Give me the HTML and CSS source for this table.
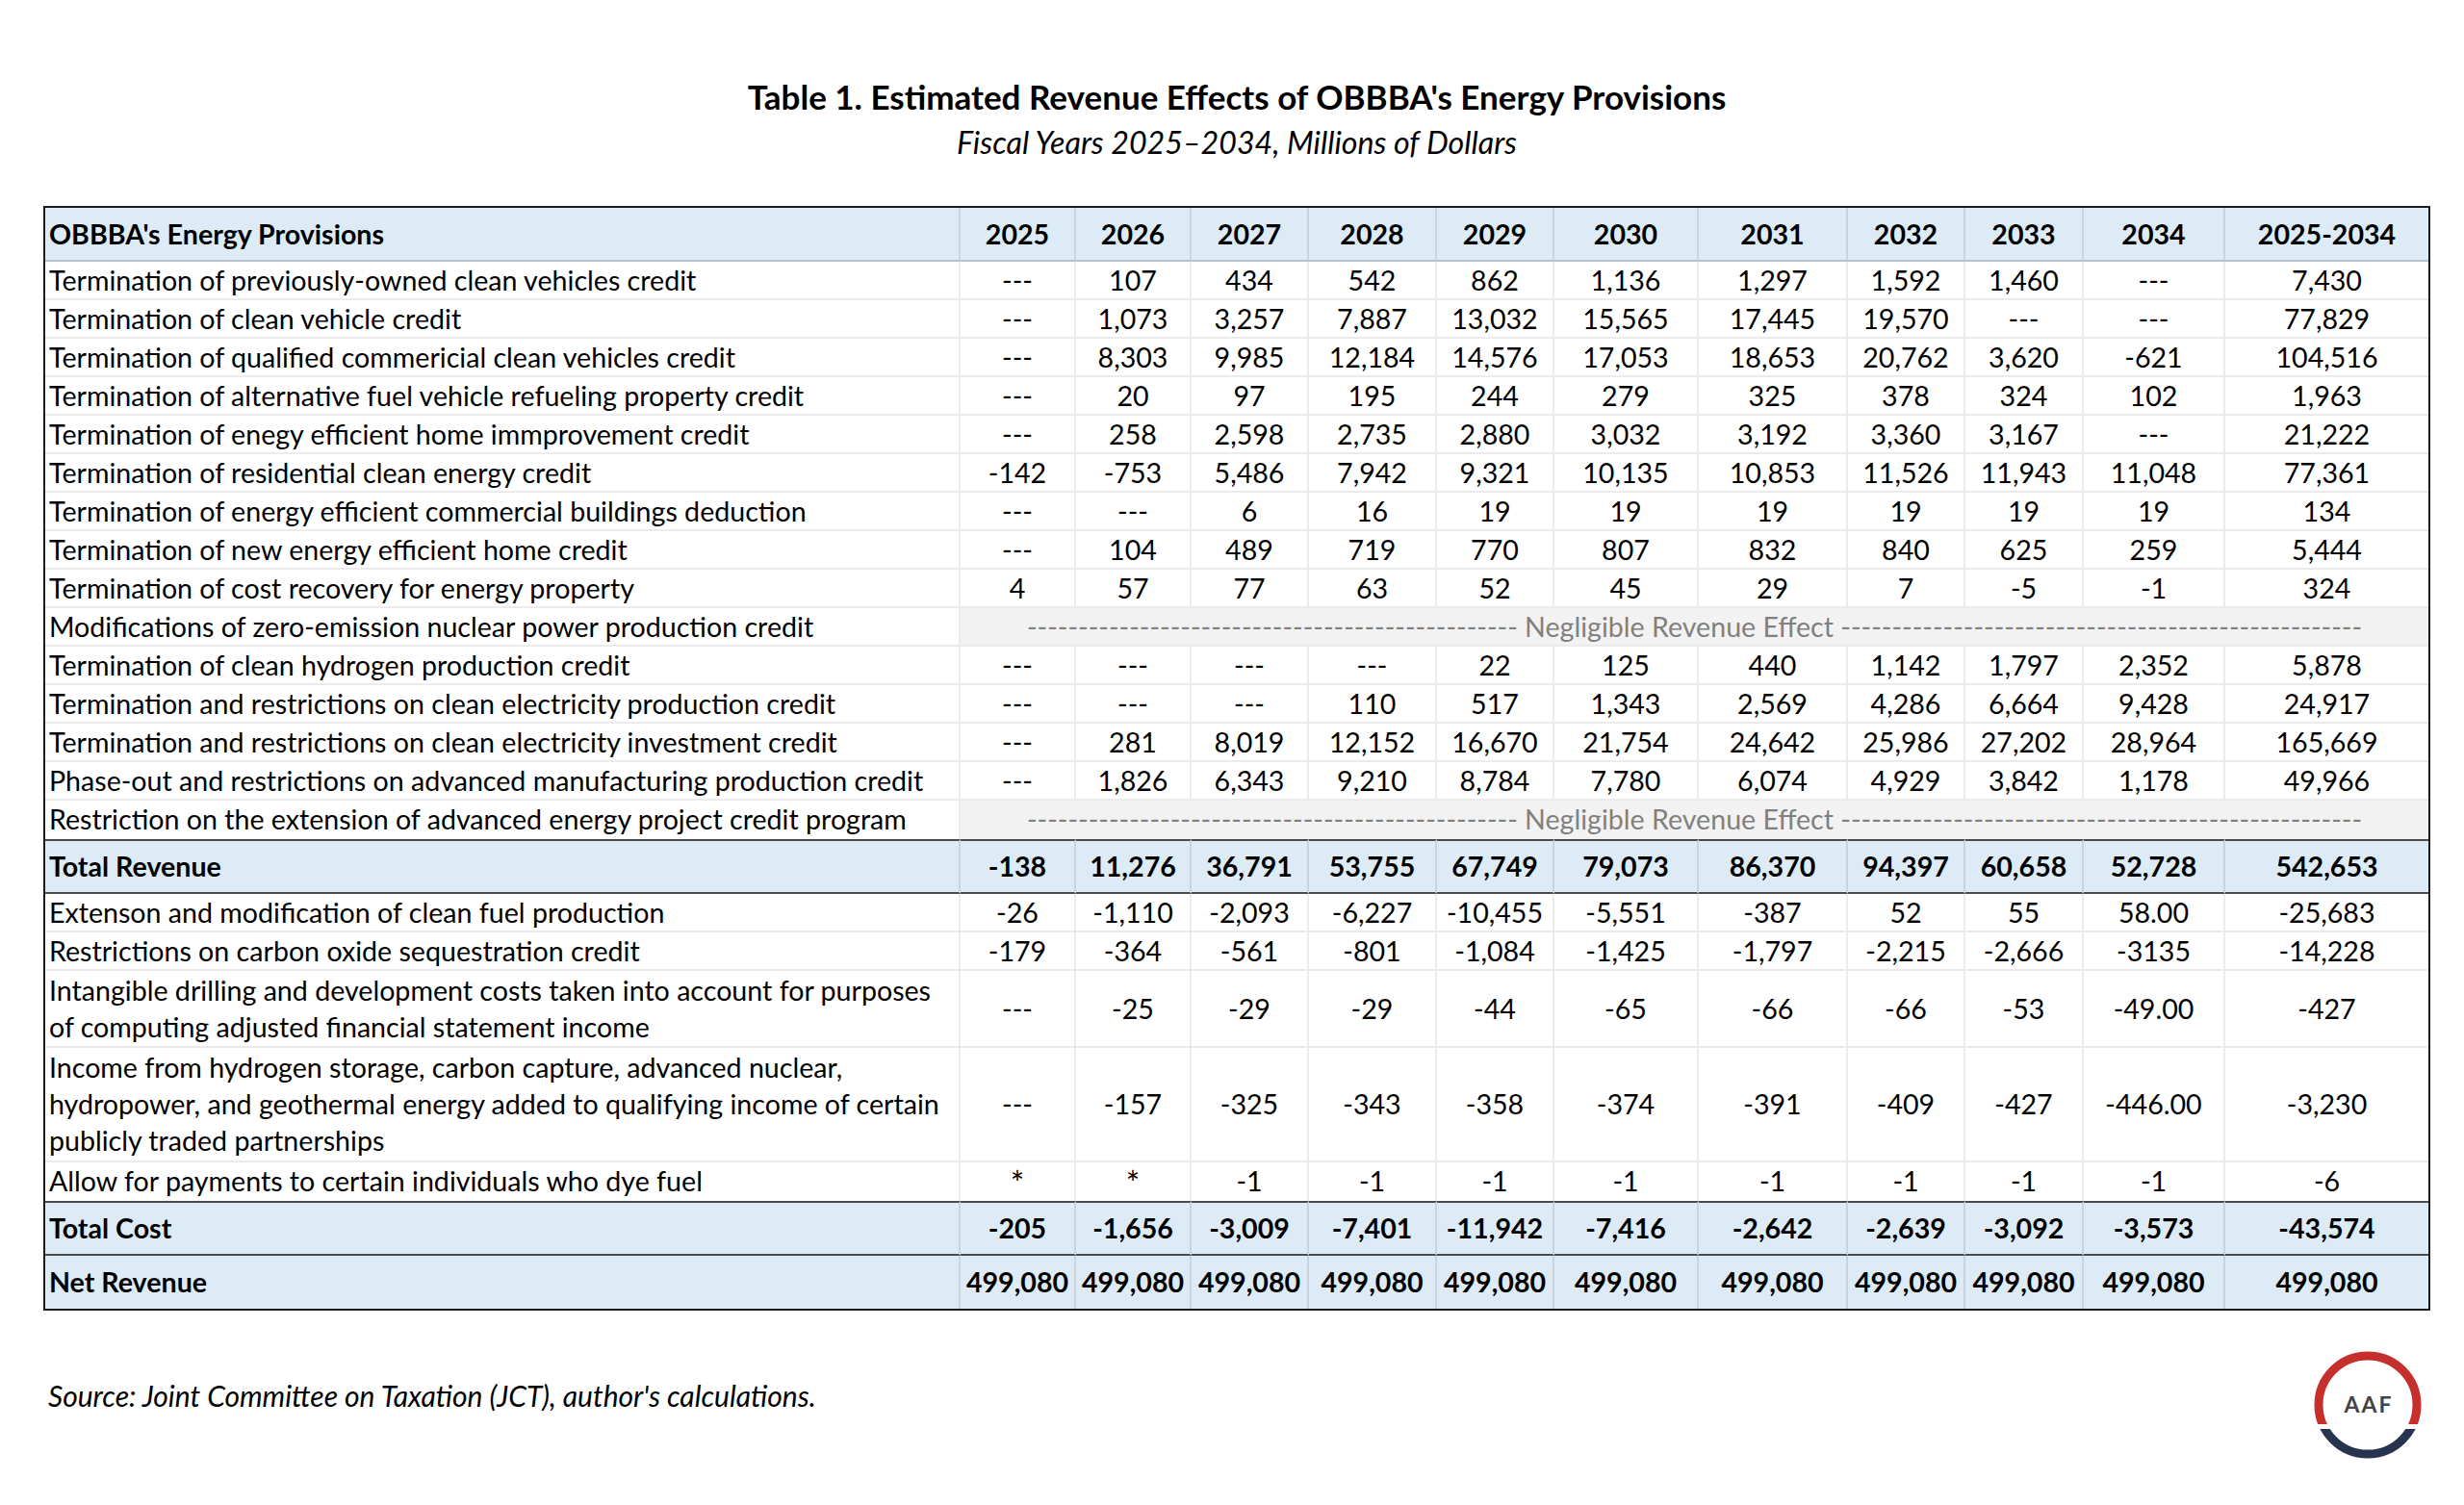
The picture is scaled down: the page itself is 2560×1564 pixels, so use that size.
FILE: index.html
```html
<!DOCTYPE html>
<html lang="en">
<head>
<meta charset="utf-8">
<title>Table 1. Estimated Revenue Effects of OBBBA's Energy Provisions</title>
<link rel="stylesheet" href="styles.css">
</head>
<body>
<div class="sheet">
  <h1 class="title">Table 1. Estimated Revenue Effects of OBBBA's Energy Provisions</h1>
  <p class="subtitle">Fiscal Years 2025–2034, Millions of Dollars</p>
  <table class="grid">
    <colgroup>
      <col class="c-label"><col class="c-y120"><col class="c-y120"><col class="c-y122"><col class="c-y133"><col class="c-y122"><col class="c-y150"><col class="c-y155"><col class="c-y122"><col class="c-y123"><col class="c-y147"><col class="c-total">
    </colgroup>
    <thead>
      <tr class="head">
        <th class="label">OBBBA's Energy Provisions</th><th>2025</th><th>2026</th><th>2027</th><th>2028</th><th>2029</th><th>2030</th><th>2031</th><th>2032</th><th>2033</th><th>2034</th><th class="last">2025-2034</th>
      </tr>
    </thead>
    <tbody>
      <tr><td class="label">Termination of previously-owned clean vehicles credit</td><td>---</td><td>107</td><td>434</td><td>542</td><td>862</td><td>1,136</td><td>1,297</td><td>1,592</td><td>1,460</td><td>---</td><td class="last">7,430</td></tr>
      <tr><td class="label">Termination of clean vehicle credit</td><td>---</td><td>1,073</td><td>3,257</td><td>7,887</td><td>13,032</td><td>15,565</td><td>17,445</td><td>19,570</td><td>---</td><td>---</td><td class="last">77,829</td></tr>
      <tr><td class="label">Termination of qualified commericial clean vehicles credit</td><td>---</td><td>8,303</td><td>9,985</td><td>12,184</td><td>14,576</td><td>17,053</td><td>18,653</td><td>20,762</td><td>3,620</td><td>-621</td><td class="last">104,516</td></tr>
      <tr><td class="label">Termination of alternative fuel vehicle refueling property credit</td><td>---</td><td>20</td><td>97</td><td>195</td><td>244</td><td>279</td><td>325</td><td>378</td><td>324</td><td>102</td><td class="last">1,963</td></tr>
      <tr><td class="label">Termination of enegy efficient home immprovement credit</td><td>---</td><td>258</td><td>2,598</td><td>2,735</td><td>2,880</td><td>3,032</td><td>3,192</td><td>3,360</td><td>3,167</td><td>---</td><td class="last">21,222</td></tr>
      <tr><td class="label">Termination of residential clean energy credit</td><td>-142</td><td>-753</td><td>5,486</td><td>7,942</td><td>9,321</td><td>10,135</td><td>10,853</td><td>11,526</td><td>11,943</td><td>11,048</td><td class="last">77,361</td></tr>
      <tr><td class="label">Termination of energy efficient commercial buildings deduction</td><td>---</td><td>---</td><td>6</td><td>16</td><td>19</td><td>19</td><td>19</td><td>19</td><td>19</td><td>19</td><td class="last">134</td></tr>
      <tr><td class="label">Termination of new energy efficient home credit</td><td>---</td><td>104</td><td>489</td><td>719</td><td>770</td><td>807</td><td>832</td><td>840</td><td>625</td><td>259</td><td class="last">5,444</td></tr>
      <tr><td class="label">Termination of cost recovery for energy property</td><td>4</td><td>57</td><td>77</td><td>63</td><td>52</td><td>45</td><td>29</td><td>7</td><td>-5</td><td>-1</td><td class="last">324</td></tr>
      <tr class="neg"><td class="label">Modifications of zero-emission nuclear power production credit</td><td class="merged last" colspan="11">------------------------------------------------ Negligible Revenue Effect ---------------------------------------------------</td></tr>
      <tr><td class="label">Termination of clean hydrogen production credit</td><td>---</td><td>---</td><td>---</td><td>---</td><td>22</td><td>125</td><td>440</td><td>1,142</td><td>1,797</td><td>2,352</td><td class="last">5,878</td></tr>
      <tr><td class="label">Termination and restrictions on clean electricity production credit</td><td>---</td><td>---</td><td>---</td><td>110</td><td>517</td><td>1,343</td><td>2,569</td><td>4,286</td><td>6,664</td><td>9,428</td><td class="last">24,917</td></tr>
      <tr><td class="label">Termination and restrictions on clean electricity investment credit</td><td>---</td><td>281</td><td>8,019</td><td>12,152</td><td>16,670</td><td>21,754</td><td>24,642</td><td>25,986</td><td>27,202</td><td>28,964</td><td class="last">165,669</td></tr>
      <tr><td class="label">Phase-out and restrictions on advanced manufacturing production credit</td><td>---</td><td>1,826</td><td>6,343</td><td>9,210</td><td>8,784</td><td>7,780</td><td>6,074</td><td>4,929</td><td>3,842</td><td>1,178</td><td class="last">49,966</td></tr>
      <tr class="neg pre"><td class="label">Restriction on the extension of advanced energy project credit program</td><td class="merged last" colspan="11">------------------------------------------------ Negligible Revenue Effect ---------------------------------------------------</td></tr>
      <tr class="total"><td class="label">Total Revenue</td><td>-138</td><td>11,276</td><td>36,791</td><td>53,755</td><td>67,749</td><td>79,073</td><td>86,370</td><td>94,397</td><td>60,658</td><td>52,728</td><td class="last">542,653</td></tr>
      <tr><td class="label">Extenson and modification of clean fuel production</td><td>-26</td><td>-1,110</td><td>-2,093</td><td>-6,227</td><td>-10,455</td><td>-5,551</td><td>-387</td><td>52</td><td>55</td><td>58.00</td><td class="last">-25,683</td></tr>
      <tr><td class="label">Restrictions on carbon oxide sequestration credit</td><td>-179</td><td>-364</td><td>-561</td><td>-801</td><td>-1,084</td><td>-1,425</td><td>-1,797</td><td>-2,215</td><td>-2,666</td><td>-3135</td><td class="last">-14,228</td></tr>
      <tr class="multi"><td class="label">Intangible drilling and development costs taken into account for purposes<br>of computing adjusted financial statement income</td><td>---</td><td>-25</td><td>-29</td><td>-29</td><td>-44</td><td>-65</td><td>-66</td><td>-66</td><td>-53</td><td>-49.00</td><td class="last">-427</td></tr>
      <tr class="multi three"><td class="label">Income from hydrogen storage, carbon capture, advanced nuclear,<br>hydropower, and geothermal energy added to qualifying income of certain<br>publicly traded partnerships</td><td>---</td><td>-157</td><td>-325</td><td>-343</td><td>-358</td><td>-374</td><td>-391</td><td>-409</td><td>-427</td><td>-446.00</td><td class="last">-3,230</td></tr>
      <tr class="pre"><td class="label">Allow for payments to certain individuals who dye fuel</td><td class="star">*</td><td class="star">*</td><td>-1</td><td>-1</td><td>-1</td><td>-1</td><td>-1</td><td>-1</td><td>-1</td><td>-1</td><td class="last">-6</td></tr>
      <tr class="total"><td class="label">Total Cost</td><td>-205</td><td>-1,656</td><td>-3,009</td><td>-7,401</td><td>-11,942</td><td>-7,416</td><td>-2,642</td><td>-2,639</td><td>-3,092</td><td>-3,573</td><td class="last">-43,574</td></tr>
      <tr class="total net"><td class="label">Net Revenue</td><td>499,080</td><td>499,080</td><td>499,080</td><td>499,080</td><td>499,080</td><td>499,080</td><td>499,080</td><td>499,080</td><td>499,080</td><td>499,080</td><td class="last">499,080</td></tr>
    </tbody>
  </table>
  <div class="footer">
    <p class="source">Source: Joint Committee on Taxation (JCT), author's calculations.</p>
    <svg class="logo" viewBox="0 0 120 120" width="120" height="120" aria-label="AAF">
      <defs>
        <clipPath id="clip-top"><rect x="0" y="0" width="120" height="80"/></clipPath>
        <clipPath id="clip-bottom"><rect x="0" y="85" width="120" height="35"/></clipPath>
      </defs>
      <circle cx="60" cy="60" r="51" fill="none" stroke="#c5302d" stroke-width="9" clip-path="url(#clip-top)"/>
      <circle cx="60" cy="60" r="51" fill="none" stroke="#26344f" stroke-width="9" clip-path="url(#clip-bottom)"/>
      <text class="logo-text" x="61" y="68" text-anchor="middle">AAF</text>
    </svg>
  </div>
</div>
</body>
</html>
```
FILE: styles.css
```css
html, body {
  margin: 0;
  padding: 0;
  background: #ffffff;
}

body {
  font-family: Lato, "Liberation Sans", sans-serif;
  color: #000000;
}

.sheet {
  width: 2480px;
  margin-left: 45px;
  padding-top: 80px;
}

.title {
  margin: 0;
  text-align: center;
  font-size: 35px;
  font-weight: 700;
  line-height: 40px;
}

.subtitle {
  margin: 8px 0 0;
  text-align: center;
  font-style: italic;
  font-size: 32.2px;
  line-height: 40px;
}

.grid {
  width: 2480px;
  margin-top: 46px;
  table-layout: fixed;
  border-collapse: separate;
  border-spacing: 0;
  border: 2px solid #1c1c1c;
  font-size: 28.6px;
}

.c-label { width: 951px; }
.c-y120 { width: 120px; }
.c-y122 { width: 122px; }
.c-y123 { width: 123px; }
.c-y133 { width: 133px; }
.c-y147 { width: 147px; }
.c-y150 { width: 150px; }
.c-y155 { width: 155px; }
.c-total { width: 211px; }

.grid th,
.grid td {
  padding: 0 2px;
  text-align: center;
  vertical-align: middle;
  white-space: nowrap;
  border-right: 2px solid #ebebeb;
  border-bottom: 2px solid #ebebeb;
  line-height: 38px;
}

.grid .label {
  text-align: left;
  padding-left: 4px;
}

.grid .last {
  border-right: none;
}

.multi td {
  padding-top: 1px;
  padding-bottom: 1px;
}

.multi.three td {
  padding-top: 1px;
  padding-bottom: 2px;
}

.head th {
  height: 54px;
  padding: 0 2px;
  background: #ddebf7;
  font-weight: 700;
  border-right-color: #cbd4de;
  border-bottom: 2px solid #b9c2cc;
}

.head th.label {
  padding-left: 4px;
}

.neg .merged {
  background: #f2f2f2;
  color: #808080;
  overflow: hidden;
}

.pre td {
  border-bottom: none;
  padding-bottom: 2px;
}

.total td {
  background: #ddebf7;
  font-weight: 700;
  line-height: 53px;
  padding-top: 0;
  padding-bottom: 0;
  border-top: 2px solid #4a4a4a;
  border-bottom: 2px solid #4a4a4a;
  border-right-color: #cbd4de;
}

.total.net td {
  border-top: none;
  border-bottom: none;
  line-height: 55px;
}

.grid .star {
  vertical-align: top;
  font-size: 34px;
  line-height: 34px;
  padding-top: 4px;
}

.footer {
  display: flex;
  justify-content: space-between;
  align-items: flex-start;
  margin-top: 38px;
  padding-right: 5px;
}

.source {
  margin: 0;
  padding: 35px 0 0 5px;
  font-style: italic;
  font-size: 30px;
  line-height: 30px;
}

.logo {
  display: block;
  flex: none;
}

.logo-text {
  font-family: Lato, "Liberation Sans", sans-serif;
  font-weight: 700;
  font-size: 23px;
  letter-spacing: 2px;
  fill: #444444;
}
```
